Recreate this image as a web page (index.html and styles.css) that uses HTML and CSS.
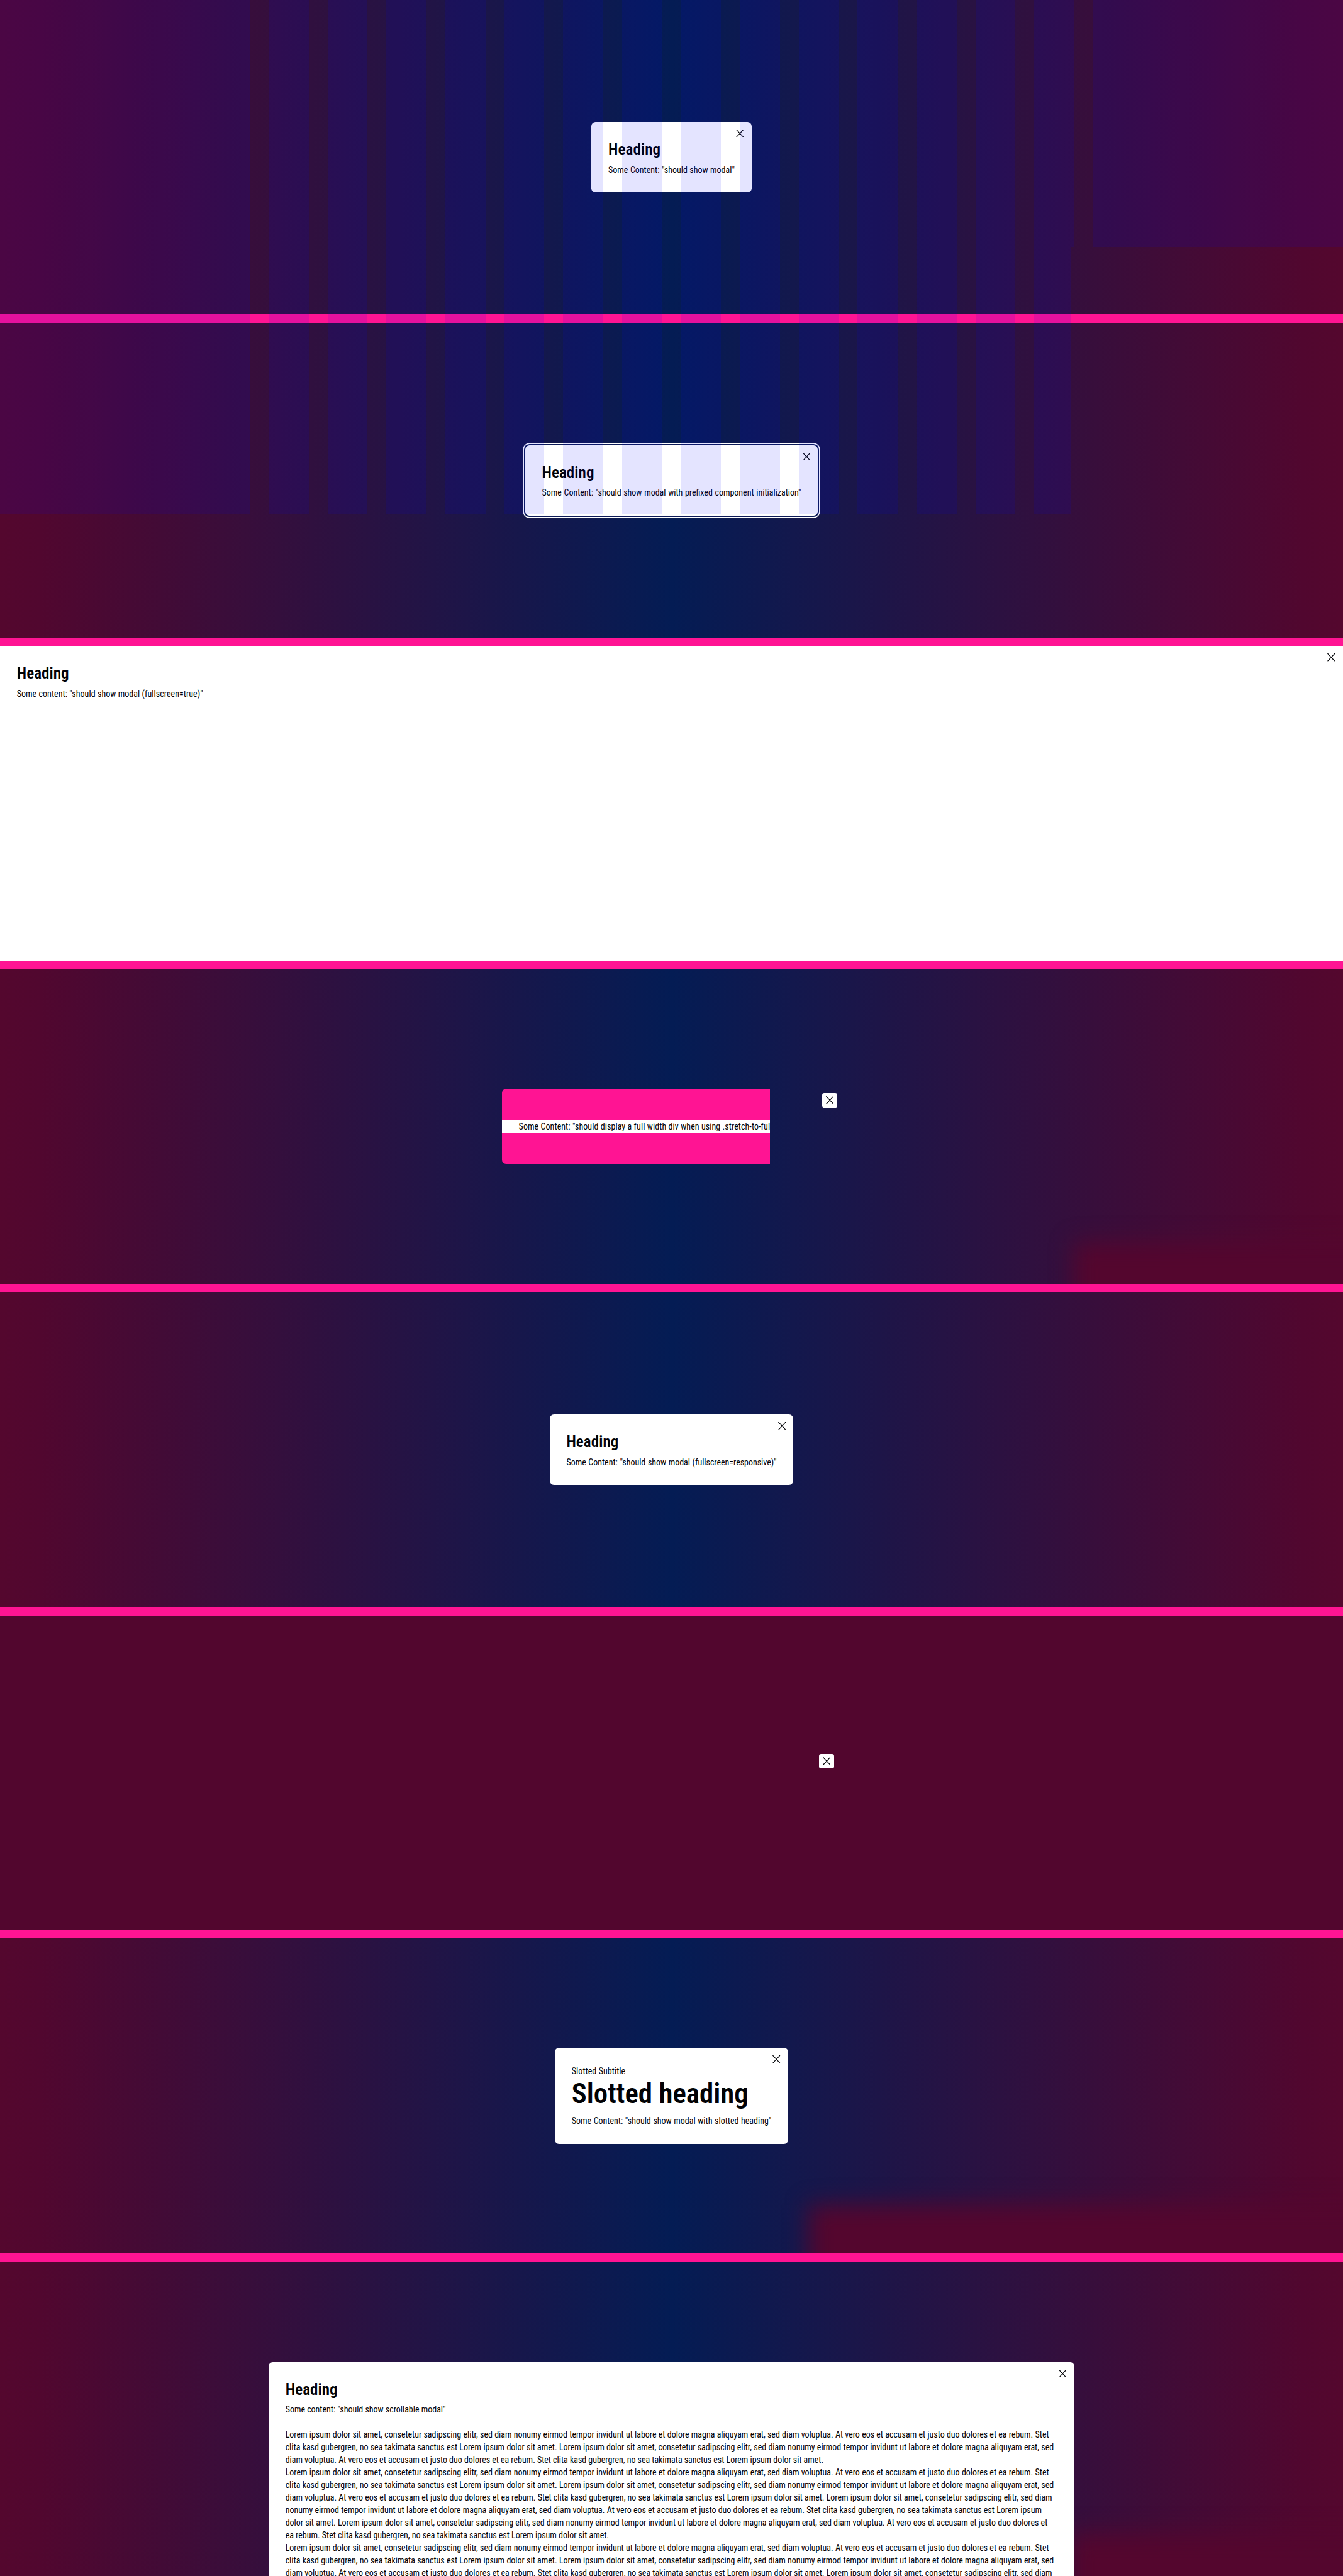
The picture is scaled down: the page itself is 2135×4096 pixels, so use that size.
FILE: index.html
```html
<!DOCTYPE html>
<html lang="en">
<head>
<meta charset="utf-8">
<title>Modal overview</title>
<link rel="stylesheet" href="styles.css">
</head>
<body>
<svg width="0" height="0" class="defs"><symbol id="close" viewBox="0 0 14 14"><path d="M.5 0 13.5 14M13.5 0 .5 14" fill="none" stroke="#010205" stroke-width="1.3"/></symbol></svg>
<main class="page">
  <section class="frame">
    <article class="modal" style="width:304.7px">
      <svg class="close"><use href="#close"/></svg>
      <h2 class="heading">Heading</h2>
      <p class="text fit">Some Content: "should show modal"</p>
    </article>
  </section>
  <section class="frame">
    <article class="modal focused" style="width:558px">
      <svg class="close"><use href="#close"/></svg>
      <h2 class="heading">Heading</h2>
      <p class="text fit">Some Content: "should show modal with prefixed component initialization"</p>
    </article>
  </section>
  <section class="frame">
    <article class="modal fullscreen">
      <svg class="close"><use href="#close"/></svg>
      <h2 class="heading">Heading</h2>
      <p class="text wide">Some content: "should show modal (fullscreen=true)"</p>
    </article>
  </section>
  <section class="frame">
    <div class="glow glow-a"></div>
    <div class="stretch"><p class="text">Some Content: "should display a full width div when using .stretch-to-full-modal-width"</p></div>
    <span class="button button-a"><svg class="x"><use href="#close"/></svg></span>
  </section>
  <section class="frame">
    <article class="modal" style="width:464.7px">
      <svg class="close"><use href="#close"/></svg>
      <h2 class="heading">Heading</h2>
      <p class="text fit">Some Content: "should show modal (fullscreen=responsive)"</p>
    </article>
  </section>
  <section class="frame plain">
    <span class="button button-b"><svg class="x"><use href="#close"/></svg></span>
  </section>
  <section class="frame">
    <div class="glow glow-b"></div>
    <article class="modal slotted" style="width:444.7px">
      <svg class="close"><use href="#close"/></svg>
      <p class="text wide">Slotted Subtitle</p>
      <h1 class="display">Slotted heading</h1>
      <p class="text fit">Some Content: "should show modal with slotted heading"</p>
    </article>
  </section>
  <section class="frame top">
    <div class="glow glow-c"></div>
    <article class="modal scrollable">
      <svg class="close"><use href="#close"/></svg>
      <h2 class="heading">Heading</h2>
      <p class="text">Some content: "should show scrollable modal"</p>
      <div class="lorem">
        <p class="text fit" style="width:1455.6px">Lorem ipsum dolor sit amet, consetetur sadipscing elitr, sed diam nonumy eirmod tempor invidunt ut labore et dolore magna aliquyam erat, sed diam voluptua. At vero eos et accusam et justo duo dolores et ea rebum. Stet</p>
        <p class="text fit" style="width:1464.6px">clita kasd gubergren, no sea takimata sanctus est Lorem ipsum dolor sit amet. Lorem ipsum dolor sit amet, consetetur sadipscing elitr, sed diam nonumy eirmod tempor invidunt ut labore et dolore magna aliquyam erat, sed</p>
        <p class="text fit" style="width:1025.8px">diam voluptua. At vero eos et accusam et justo duo dolores et ea rebum. Stet clita kasd gubergren, no sea takimata sanctus est Lorem ipsum dolor sit amet.</p>
        <p class="text fit" style="width:1455.6px">Lorem ipsum dolor sit amet, consetetur sadipscing elitr, sed diam nonumy eirmod tempor invidunt ut labore et dolore magna aliquyam erat, sed diam voluptua. At vero eos et accusam et justo duo dolores et ea rebum. Stet</p>
        <p class="text fit" style="width:1464.6px">clita kasd gubergren, no sea takimata sanctus est Lorem ipsum dolor sit amet. Lorem ipsum dolor sit amet, consetetur sadipscing elitr, sed diam nonumy eirmod tempor invidunt ut labore et dolore magna aliquyam erat, sed</p>
        <p class="text fit" style="width:1461.5px">diam voluptua. At vero eos et accusam et justo duo dolores et ea rebum. Stet clita kasd gubergren, no sea takimata sanctus est Lorem ipsum dolor sit amet. Lorem ipsum dolor sit amet, consetetur sadipscing elitr, sed diam</p>
        <p class="text fit" style="width:1441.6px">nonumy eirmod tempor invidunt ut labore et dolore magna aliquyam erat, sed diam voluptua. At vero eos et accusam et justo duo dolores et ea rebum. Stet clita kasd gubergren, no sea takimata sanctus est Lorem ipsum</p>
        <p class="text fit" style="width:1452.8px">dolor sit amet. Lorem ipsum dolor sit amet, consetetur sadipscing elitr, sed diam nonumy eirmod tempor invidunt ut labore et dolore magna aliquyam erat, sed diam voluptua. At vero eos et accusam et justo duo dolores et</p>
        <p class="text fit" style="width:616.8px">ea rebum. Stet clita kasd gubergren, no sea takimata sanctus est Lorem ipsum dolor sit amet.</p>
        <p class="text fit" style="width:1455.6px">Lorem ipsum dolor sit amet, consetetur sadipscing elitr, sed diam nonumy eirmod tempor invidunt ut labore et dolore magna aliquyam erat, sed diam voluptua. At vero eos et accusam et justo duo dolores et ea rebum. Stet</p>
        <p class="text fit" style="width:1464.6px">clita kasd gubergren, no sea takimata sanctus est Lorem ipsum dolor sit amet. Lorem ipsum dolor sit amet, consetetur sadipscing elitr, sed diam nonumy eirmod tempor invidunt ut labore et dolore magna aliquyam erat, sed</p>
        <p class="text fit" style="width:1461.5px">diam voluptua. At vero eos et accusam et justo duo dolores et ea rebum. Stet clita kasd gubergren, no sea takimata sanctus est Lorem ipsum dolor sit amet. Lorem ipsum dolor sit amet, consetetur sadipscing elitr, sed diam</p>
      </div>
    </article>
  </section>
  <div class="grid-overlay"><i></i><i></i><i></i><i></i><i></i><i></i><i></i><i></i><i></i><i></i><i></i><i></i><i></i><i></i><i></i><i></i></div>
</main>
</body>
</html>
```
FILE: styles.css
```css
* { box-sizing: border-box; }
html { overflow: hidden; }
body { margin: 0; height: 4096px; overflow: hidden; background: #ff1493; }
.defs { position: absolute; }
.page {
  zoom: 0.83398;
  position: relative;
  display: flex;
  flex-direction: column;
  gap: 16px;
  width: 2560px;
  height: 4912px;
  overflow: hidden;
  color: #010205;
  font-family: "Roboto Condensed", Roboto, sans-serif;
  font-stretch: 75%;
}
.frame {
  position: relative;
  display: flex;
  flex: 0 0 600px;
  align-items: center;
  justify-content: center;
  overflow: hidden;
  background: linear-gradient(90deg, #54072e 0, #51072f 3%, #041c54 50%, #51072f 97%, #54072e 100%);
}
.frame.plain { background: #52062e; }
.frame.top { align-items: flex-start; padding-top: 192px; }
.modal {
  position: relative;
  height: 134px;
  padding: 32px;
  background: #fff;
  border-radius: 8px;
}
.focused { box-shadow: 0 0 0 2.4px #0c1a57, 0 0 0 4.6px #fff; }
.fullscreen { width: 100%; height: 100%; border-radius: 0; }
.slotted { height: 182.7px; }
.scrollable { width: 1536px; height: 600px; }
.close { position: absolute; top: 14px; right: 14.5px; width: 15px; height: 15px; }
.heading { margin: 0 0 6.5px; font-size: 30px; line-height: 40px; font-weight: 600; letter-spacing: 0.1px; }
.display { margin: 0 0 8.5px; font-size: 53.8px; line-height: 62px; font-weight: 600; white-space: nowrap; }
.text { margin: 0; font-size: 16.75px; line-height: 24px; white-space: nowrap; }
.wide { letter-spacing: 0.08px; }
.fit { white-space: normal; height: 24px; text-align: justify; text-align-last: justify; word-spacing: -0.5px; }
.lorem { padding-top: 24px; }
.stretch {
  position: absolute;
  left: 956.8px;
  top: 228px;
  width: 511.2px;
  height: 144px;
  padding: 60px 0;
  overflow: hidden;
  background: #ff1493;
  border-radius: 8px 0 0 8px;
}
.stretch .text { padding-left: 32px; background: #fff; letter-spacing: 0.1px; }
.button {
  position: absolute;
  display: flex;
  align-items: center;
  justify-content: center;
  width: 28px;
  height: 28px;
  background: #fff;
  border-radius: 4px;
}
.button-a { left: 1567.5px; top: 236px; }
.button-b { left: 1561.5px; top: 264px; }
.x { width: 15px; height: 15px; }
.glow { position: absolute; right: -80px; bottom: -80px; background: #54062e; filter: blur(22px); }
.glow-a { left: 2048px; top: 522px; }
.glow-b { left: 1542px; top: 508px; }
.glow-c { left: 2040px; top: 518px; }
.grid-overlay {
  position: absolute;
  top: 0;
  left: 0;
  display: flex;
  gap: 36px;
  width: 2560px;
  height: 981px;
  clip-path: polygon(0 0, 2560px 0, 2560px 471px, 2041px 471px, 2041px 981px, 0 981px);
}
.grid-overlay i { flex: 1; background: rgba(0, 0, 255, 0.105); }
.grid-overlay i:first-child, .grid-overlay i:last-child { flex: 0 0 476px; }
```
